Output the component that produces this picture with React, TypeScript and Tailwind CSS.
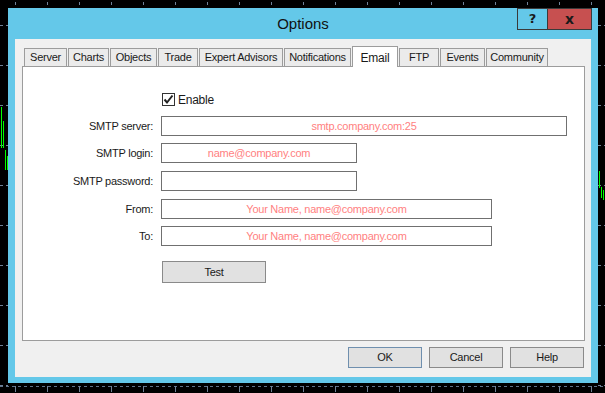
import React from "react"

const tabs = [
  { name: "Server", w: 43 },
  { name: "Charts", w: 41 },
  { name: "Objects", w: 47 },
  { name: "Trade", w: 40 },
  { name: "Expert Advisors", w: 84 },
  { name: "Notifications", w: 67 },
  { name: "Email", w: 46, active: true },
  { name: "FTP", w: 40 },
  { name: "Events", w: 45 },
  { name: "Community", w: 62 },
]

// chart leftovers behind the dialog
function ChartBackdrop() {
  const xs = Array.from({ length: 19 }, (_, i) => 15 + i * 32)
  const ys = Array.from({ length: 10 }, (_, i) => 25 + i * 40)
  return (
    <svg className="absolute inset-0" width="605" height="393" viewBox="0 0 605 393">
      {xs.map(x => (
        <line key={"t" + x} x1={x + 0.5} y1="2" x2={x + 0.5} y2="5" stroke="#6f8197" />
      ))}
      <line x1="0" y1="386.5" x2="605" y2="386.5" stroke="#5f7388" strokeDasharray="3 3" />
      {xs.map(x => (
        <line key={"b" + x} x1={x + 0.5} y1="386" x2={x + 0.5} y2="392" stroke="#6f8197" />
      ))}
      {ys.map(y => (
        <g key={"h" + y}>
          <line x1="0" y1={y + 0.5} x2="8" y2={y + 0.5} stroke="#6f8197" strokeDasharray="3 3" />
          <line x1="598" y1={y + 0.5} x2="605" y2={y + 0.5} stroke="#6f8197" strokeDasharray="3 3" />
        </g>
      ))}
      <g stroke="#00ff00">
        <line x1="1.5" y1="107" x2="1.5" y2="148" />
        <line x1="3.5" y1="121" x2="3.5" y2="148" />
        <line x1="5.5" y1="150" x2="5.5" y2="170" />
        <line x1="7.5" y1="156" x2="7.5" y2="170" />
        <line x1="599.5" y1="171" x2="599.5" y2="188" />
        <line x1="601.5" y1="187" x2="601.5" y2="198" />
        <line x1="603.5" y1="190" x2="603.5" y2="200" />
      </g>
    </svg>
  )
}

function Field({ label, value, w, mt }: { label: string; value?: string; w: string; mt: string }) {
  return (
    <div className={"flex items-center " + mt}>
      <div className="w-[130px] text-right">{label}</div>
      <div className={"ml-[8px] h-[20px] border border-[#707070] bg-white flex items-center justify-center text-[#ff7f7f] " + w}>
        {value}
      </div>
    </div>
  )
}

export default function App() {
  return (
    <div className="relative w-[605px] h-[393px] bg-black overflow-hidden font-['Liberation_Sans',Arial,sans-serif] text-[11px] tracking-[-0.25px] text-[#1a1a1a]">
      <ChartBackdrop />

      <div className="relative ml-[8px] mt-[8px] w-[590px] h-[375px] bg-[#64c8e9] flex flex-col">
        {/* title bar */}
        <div className="relative h-[31px] flex items-center justify-center">
          <span className="text-[15px] tracking-normal text-[#111] mt-[1px]">Options</span>
          <div className="absolute top-0 right-[6px] flex">
            <div className="w-[30px] h-[22px] border border-[#3a3a3a] border-r-0 flex items-center justify-center font-bold text-[13px] font-['DejaVu_Sans',sans-serif]">?</div>
            <div className="w-[45px] h-[22px] border border-[#3a3a3a] bg-[#c75050] flex items-center justify-center font-bold text-[14px] font-['DejaVu_Sans',sans-serif]">x</div>
          </div>
        </div>

        {/* client area */}
        <div className="mx-[7px] h-[338px] bg-[#f0f0f0] pl-[7px] pr-[6px] pt-[7px] flex flex-col">
          <div className="flex items-end h-[20px] pl-[2px] gap-[1px]">
            {tabs.map(t =>
              t.active ? (
                <div
                  key={t.name}
                  style={{ width: t.w }}
                  className="relative z-10 -mb-px h-[21px] bg-white border border-b-0 border-[#9c9c9c] flex items-start justify-center pt-[2px] text-[12px]"
                >
                  {t.name}
                </div>
              ) : (
                <div
                  key={t.name}
                  style={{ width: t.w }}
                  className="h-[18px] bg-[#ebebeb] border border-b-0 border-[#9c9c9c] flex items-center justify-center whitespace-nowrap"
                >
                  {t.name}
                </div>
              )
            )}
          </div>

          {/* tab panel */}
          <div className="h-[275px] bg-white border border-[#9c9c9c] pt-[26px] flex flex-col">
            <div className="flex items-center ml-[139px] h-[13px]">
              <div className="w-[13px] h-[13px] border border-[#333] bg-white flex items-center justify-center">
                <svg width="11" height="11" viewBox="0 0 11 11">
                  <path d="M1.5 5.5 L4 8.5 L9.5 1.5" fill="none" stroke="#222" strokeWidth="2" />
                </svg>
              </div>
              <span className="ml-[3px] text-[12px]">Enable</span>
            </div>

            <Field label="SMTP server:" value="smtp.company.com:25" w="w-[406px]" mt="mt-[10px]" />
            <Field label="SMTP login:" value="name@company.com" w="w-[196px]" mt="mt-[7px]" />
            <Field label="SMTP password:" w="w-[196px]" mt="mt-[8px]" />
            <Field label="From:" value="Your Name, name@company.com" w="w-[331px]" mt="mt-[8px]" />
            <Field label="To:" value="Your Name, name@company.com" w="w-[331px]" mt="mt-[7px]" />

            <div className="ml-[139px] mt-[15px] w-[104px] h-[22px] bg-[#e1e1e1] border border-[#8a8a8a] flex items-center justify-center">
              Test
            </div>
          </div>

          <div className="flex justify-end gap-[7px] mt-[6px] pr-[1px]">
            <div className="w-[74px] h-[21px] bg-[#e1e1e1] border border-[#6f8fae] flex items-center justify-center">OK</div>
            <div className="w-[74px] h-[21px] bg-[#e1e1e1] border border-[#8a8a8a] flex items-center justify-center">Cancel</div>
            <div className="w-[74px] h-[21px] bg-[#e1e1e1] border border-[#8a8a8a] flex items-center justify-center">Help</div>
          </div>
        </div>
      </div>
    </div>
  )
}
